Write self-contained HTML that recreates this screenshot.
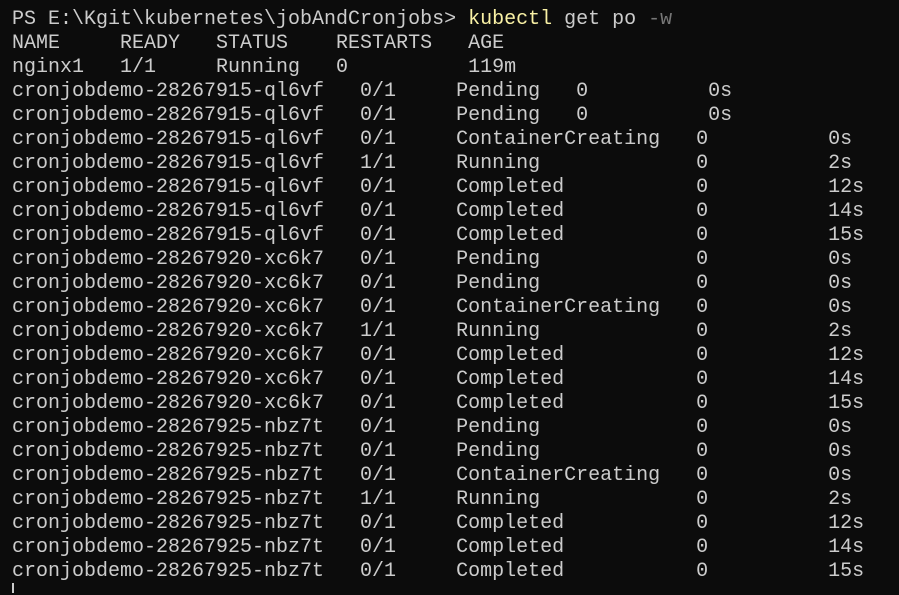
<!DOCTYPE html>
<html><head><meta charset="utf-8"><style>
html,body{margin:0;padding:0;background:#0c0c0c;width:899px;height:595px;overflow:hidden}
pre{margin:0;position:absolute;left:12px;top:8px;font-family:"Liberation Mono",monospace;font-size:20px;line-height:24px;color:#cccccc;white-space:pre}
.y{color:#f9f1a5}.g{color:#767676}
.cur{position:absolute;left:12px;top:583px;width:2px;height:10px;background:#cccccc}
</style></head><body>
<pre>PS E:\Kgit\kubernetes\jobAndCronjobs&gt; <span class="y">kubectl</span> get po <span class="g">-w</span>
NAME     READY   STATUS    RESTARTS   AGE
nginx1   1/1     Running   0          119m
cronjobdemo-28267915-ql6vf   0/1     Pending   0          0s
cronjobdemo-28267915-ql6vf   0/1     Pending   0          0s
cronjobdemo-28267915-ql6vf   0/1     ContainerCreating   0          0s
cronjobdemo-28267915-ql6vf   1/1     Running             0          2s
cronjobdemo-28267915-ql6vf   0/1     Completed           0          12s
cronjobdemo-28267915-ql6vf   0/1     Completed           0          14s
cronjobdemo-28267915-ql6vf   0/1     Completed           0          15s
cronjobdemo-28267920-xc6k7   0/1     Pending             0          0s
cronjobdemo-28267920-xc6k7   0/1     Pending             0          0s
cronjobdemo-28267920-xc6k7   0/1     ContainerCreating   0          0s
cronjobdemo-28267920-xc6k7   1/1     Running             0          2s
cronjobdemo-28267920-xc6k7   0/1     Completed           0          12s
cronjobdemo-28267920-xc6k7   0/1     Completed           0          14s
cronjobdemo-28267920-xc6k7   0/1     Completed           0          15s
cronjobdemo-28267925-nbz7t   0/1     Pending             0          0s
cronjobdemo-28267925-nbz7t   0/1     Pending             0          0s
cronjobdemo-28267925-nbz7t   0/1     ContainerCreating   0          0s
cronjobdemo-28267925-nbz7t   1/1     Running             0          2s
cronjobdemo-28267925-nbz7t   0/1     Completed           0          12s
cronjobdemo-28267925-nbz7t   0/1     Completed           0          14s
cronjobdemo-28267925-nbz7t   0/1     Completed           0          15s</pre>
<div class="cur"></div>
</body></html>
